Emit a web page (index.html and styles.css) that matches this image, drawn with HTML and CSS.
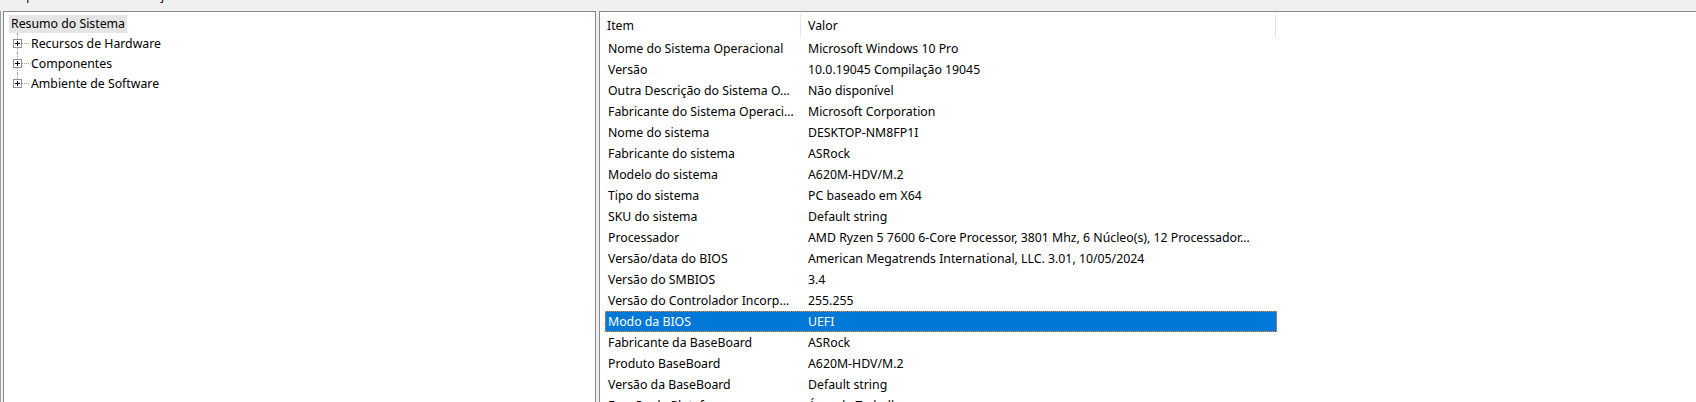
FILE: index.html
```html
<!DOCTYPE html>
<html>
<head>
  <title>Informações do Sistema</title>
  <link rel="stylesheet" href="styles.css">
</head>
<body>
  <div class="menubar">
    <span class="menu-item">Arquivo</span>
    <span class="menu-item">Editar</span>
    <span class="menu-item">Exibir</span>
    <span class="menu-item">Ajuda</span>
  </div>

  <div class="panes">
    <div class="tree-pane">
      <div class="tree-root"><span class="root-label">Resumo do Sistema</span></div>
      <ul class="tree-children">
        <li class="tree-node">
          <svg class="expander" width="9" height="9" viewBox="0 0 9 9"><rect x=".5" y=".5" width="8" height="8" fill="#fff" stroke="#919191"/><path d="M2 4.5h5M4.5 2v5" stroke="#000"/></svg>
          <span class="connector"></span>
          <span class="node-label">Recursos de Hardware</span>
        </li>
        <li class="tree-node">
          <svg class="expander" width="9" height="9" viewBox="0 0 9 9"><rect x=".5" y=".5" width="8" height="8" fill="#fff" stroke="#919191"/><path d="M2 4.5h5M4.5 2v5" stroke="#000"/></svg>
          <span class="connector"></span>
          <span class="node-label">Componentes</span>
        </li>
        <li class="tree-node last">
          <svg class="expander" width="9" height="9" viewBox="0 0 9 9"><rect x=".5" y=".5" width="8" height="8" fill="#fff" stroke="#919191"/><path d="M2 4.5h5M4.5 2v5" stroke="#000"/></svg>
          <span class="connector"></span>
          <span class="node-label">Ambiente de Software</span>
        </li>
      </ul>
    </div>

    <div class="list-pane">
      <div class="list-header">
        <div class="col-head col-item">Item</div>
        <div class="col-head col-value">Valor</div>
      </div>

      <div class="list-row"><div class="cell-item">Nome do Sistema Operacional</div><div class="cell-value">Microsoft Windows 10 Pro</div></div>
      <div class="list-row"><div class="cell-item">Versão</div><div class="cell-value">10.0.19045 Compilação 19045</div></div>
      <div class="list-row"><div class="cell-item">Outra Descrição do Sistema O…</div><div class="cell-value">Não disponível</div></div>
      <div class="list-row"><div class="cell-item">Fabricante do Sistema Operaci…</div><div class="cell-value">Microsoft Corporation</div></div>
      <div class="list-row"><div class="cell-item">Nome do sistema</div><div class="cell-value">DESKTOP-NM8FP1I</div></div>
      <div class="list-row"><div class="cell-item">Fabricante do sistema</div><div class="cell-value">ASRock</div></div>
      <div class="list-row"><div class="cell-item">Modelo do sistema</div><div class="cell-value">A620M-HDV/M.2</div></div>
      <div class="list-row"><div class="cell-item">Tipo do sistema</div><div class="cell-value">PC baseado em X64</div></div>
      <div class="list-row"><div class="cell-item">SKU do sistema</div><div class="cell-value">Default string</div></div>
      <div class="list-row"><div class="cell-item">Processador</div><div class="cell-value">AMD Ryzen 5 7600 6-Core Processor, 3801 Mhz, 6 Núcleo(s), 12 Processador…</div></div>
      <div class="list-row"><div class="cell-item">Versão/data do BIOS</div><div class="cell-value">American Megatrends International, LLC. 3.01, 10/05/2024</div></div>
      <div class="list-row"><div class="cell-item">Versão do SMBIOS</div><div class="cell-value">3.4</div></div>
      <div class="list-row"><div class="cell-item">Versão do Controlador Incorp…</div><div class="cell-value">255.255</div></div>
      <div class="list-row selected"><div class="cell-item">Modo da BIOS</div><div class="cell-value">UEFI</div></div>
      <div class="list-row"><div class="cell-item">Fabricante da BaseBoard</div><div class="cell-value">ASRock</div></div>
      <div class="list-row"><div class="cell-item">Produto BaseBoard</div><div class="cell-value">A620M-HDV/M.2</div></div>
      <div class="list-row"><div class="cell-item">Versão da BaseBoard</div><div class="cell-value">Default string</div></div>
      <div class="list-row"><div class="cell-item">Função da Plataforma</div><div class="cell-value">Área de Trabalho</div></div>
    </div>
  </div>
</body>
</html>
```

FILE: styles.css
```css
:root {
  --bg-window: #f0f0f0;
  --bg-pane: #ffffff;
  --border-pane: #828790;
  --divider: #e5e5e5;
  --tree-line: #a0a0a0;
  --root-hover: #e5e5e5;
  --select: #0078d7;
  --focus: #ff8728;
}

* {
  box-sizing: border-box;
}

body {
  margin: 0;
  width: 1696px;
  height: 402px;
  overflow: hidden;
  background: var(--bg-window);
  color: #000;
  font-family: "Noto Sans", "Open Sans", sans-serif;
  font-size: 12.3px;
}

/* menu bar, mostly scrolled out of view */
.menubar {
  display: flex;
  gap: 11px;
  height: 19px;
  line-height: 19px;
  margin-top: -14px;
  padding-left: 9px;
}

.panes {
  display: flex;
  gap: 3px;
  margin-top: 6px;
  padding-left: 2px;
  border-left: 1px solid var(--tree-line);
  height: 400px;
}

/* left tree */
.tree-pane {
  width: 593px;
  flex-shrink: 0;
  border: 1px solid var(--border-pane);
  border-bottom: none;
  background: var(--bg-pane);
}

.tree-root {
  height: 21px;
  padding: 3px 0 0 5px;
}

.root-label {
  display: inline-block;
  height: 18px;
  line-height: 18px;
  padding: 0 2px;
  background: var(--root-hover);
}

.tree-children {
  list-style: none;
  margin: 0;
  padding: 0;
}

.tree-node {
  position: relative;
  display: flex;
  align-items: center;
  height: 20px;
  padding-left: 9px;
}

.tree-node::before {
  content: '';
  position: absolute;
  left: 13px;
  top: 0;
  bottom: 0;
  border-left: 1px dotted var(--tree-line);
}

.tree-node.last::before {
  bottom: 50%;
}

.expander {
  position: relative;
  flex-shrink: 0;
}

.connector {
  width: 7px;
  margin: 0 1px 0 0;
  border-top: 1px dotted var(--tree-line);
}

.node-label {
  padding-left: 1px;
}

/* right list view */
.list-pane {
  flex: 1;
  border: 1px solid var(--border-pane);
  border-right: none;
  border-bottom: none;
  background: var(--bg-pane);
}

.list-header {
  display: flex;
  height: 26px;
}

.col-head {
  margin-top: 2px;
  height: 24px;
  line-height: 23px;
  padding-left: 7px;
  border-right: 1px solid var(--divider);
}

.col-item {
  width: 201px;
}

.col-value {
  width: 475px;
}

.list-row {
  display: flex;
  width: 672px;
  height: 21px;
  line-height: 21px;
  margin-left: 5px;
  white-space: nowrap;
}

.cell-item {
  width: 196px;
  padding-left: 3px;
  overflow: hidden;
}

.cell-value {
  width: 476px;
  padding-left: 7px;
  overflow: hidden;
}

.list-row.selected {
  background: var(--select);
  color: #fff;
  outline: 1px dotted var(--focus);
  outline-offset: -1px;
}
```
